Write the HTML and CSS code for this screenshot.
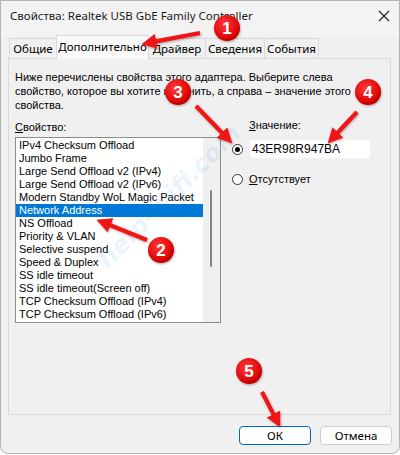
FILE: index.html
```html
<!DOCTYPE html>
<html lang="ru">
<head>
<meta charset="utf-8">
<title>Свойства</title>
<link rel="stylesheet" href="styles.css">
</head>
<body>
<div class="window">
  <div class="titlebar">
    <span class="title">Свойства: Realtek USB GbE Family Controller</span>
    <svg class="close" width="12" height="12" viewBox="0 0 12 12"><path d="M1 1 L11 11 M11 1 L1 11" stroke="#1a1a1a" stroke-width="1.1" fill="none"/></svg>
  </div>
  <div class="tabs">
    <div class="tab t1">Общие</div>
    <div class="tab t2 active">Дополнительно</div>
    <div class="tab t3">Драйвер</div>
    <div class="tab t4">Сведения</div>
    <div class="tab t5">События</div>
  </div>
  <div class="panel">
    <p class="desc">Ниже перечислены свойства этого адаптера. Выберите слева<br>свойство, которое вы хотите изменить, а справа – значение этого<br>свойства.</p>
    <div class="cols">
      <div class="left">
        <div class="label"><u>С</u>войство:</div>
        <div class="listbox">
          <ul class="items">
            <li>IPv4 Checksum Offload</li>
            <li>Jumbo Frame</li>
            <li>Large Send Offload v2 (IPv4)</li>
            <li>Large Send Offload v2 (IPv6)</li>
            <li>Modern Standby WoL Magic Packet</li>
            <li class="sel">Network Address</li>
            <li>NS Offload</li>
            <li>Priority &amp; VLAN</li>
            <li>Selective suspend</li>
            <li>Speed &amp; Duplex</li>
            <li>SS idle timeout</li>
            <li>SS idle timeout(Screen off)</li>
            <li>TCP Checksum Offload (IPv4)</li>
            <li>TCP Checksum Offload (IPv6)</li>
          </ul>
          <div class="scroll"><div class="thumb"></div></div>
        </div>
      </div>
      <div class="right">
        <div class="label vlabel"><u>З</u>начение:</div>
        <div class="opt opt1"><span class="radio on"></span><div class="input">43ER98R947BA</div></div>
        <div class="opt opt2"><span class="radio"></span><span class="optlabel"><u>О</u>тсутствует</span></div>
      </div>
    </div>
  </div>
  <div class="buttons">
    <button class="btn default">ОК</button>
    <button class="btn">Отмена</button>
  </div>
  <div class="watermark">help-wifi.com</div>
  <svg class="overlay" width="400" height="455" viewBox="0 0 400 455">
    <defs>
      <radialGradient id="rg" cx="0.4" cy="0.35" r="0.7">
        <stop offset="0" stop-color="#ff3b3b"/>
        <stop offset="0.7" stop-color="#e00808"/>
        <stop offset="1" stop-color="#b30000"/>
      </radialGradient>
      <marker id="head" markerWidth="3.6" markerHeight="3.6" refX="1" refY="5" viewBox="0 0 10 10" orient="auto" markerUnits="strokeWidth">
        <path d="M0,0 L10,5 L0,10 z" fill="#f01414"/>
      </marker>
      <filter id="sh" x="-30%" y="-30%" width="160%" height="160%">
        <feDropShadow dx="0.6" dy="1" stdDeviation="1" flood-color="#000" flood-opacity="0.35"/>
      </filter>
    </defs>
    <g stroke="#f01414" stroke-width="4.2" fill="none" marker-end="url(#head)" filter="url(#sh)">
      <line x1="200" y1="33" x2="154.8" y2="41.6"/>
      <line x1="196" y1="106" x2="222.9" y2="133.7"/>
      <line x1="357" y1="112" x2="336.9" y2="133.5"/>
      <line x1="147" y1="240" x2="109.1" y2="224.8"/>
      <line x1="262" y1="392" x2="274.1" y2="415.4"/>
    </g>
    <g filter="url(#sh)">
      <circle cx="227" cy="28" r="13" fill="url(#rg)"/>
      <circle cx="178" cy="92" r="13" fill="url(#rg)"/>
      <circle cx="368" cy="92" r="13" fill="url(#rg)"/>
      <circle cx="161" cy="250" r="13" fill="url(#rg)"/>
      <circle cx="249" cy="371" r="13" fill="url(#rg)"/>
    </g>
    <g class="nums" fill="#fff" text-anchor="middle">
      <text x="227" y="34">1</text>
      <text x="178" y="98">3</text>
      <text x="368" y="98">4</text>
      <text x="161" y="256">2</text>
      <text x="249" y="377">5</text>
    </g>
  </svg>
</div>
</body>
</html>
```

FILE: styles.css
```css
* { box-sizing: border-box; }
html, body { margin: 0; padding: 0; }
body {
  width: 400px;
  height: 455px;
  background: #ffffff;
  overflow: hidden;
  font-family: "Liberation Sans", Arial, sans-serif;
  font-size: 11px;
  color: #000;
}
.window {
  position: relative;
  width: 400px;
  height: 454px;
  background: #f0f0f0;
  border: 1px solid #b4b4b4;
  border-radius: 0 0 8px 8px;
  overflow: hidden;
}
.titlebar {
  height: 35px;
  display: flex;
  align-items: center;
  justify-content: space-between;
  padding: 0 8px 0 9px;
  background: #f3f3f3;
}
.title {
  font-family: "Noto Sans", sans-serif;
  font-size: 11.5px;
  color: #1a1a1a;
  margin-top: -6px;
}
.close { margin-top: -6px; margin-right: 1px; }
.tabs {
  height: 22px;
  display: flex;
  align-items: flex-end;
  padding-left: 8px;
  position: relative;
  z-index: 2;
}
.tab {
  height: 20px;
  font-family: "Noto Sans", sans-serif;
  font-size: 11.5px;
  line-height: 19px;
  border: 1px solid #d9d9d9;
  border-bottom: none;
  border-left: none;
  background: #f0f0f0;
  text-align: center;
  color: #000;
}
.t1 { width: 48px; border-left: 1px solid #d9d9d9; }
.t2 { width: 92px; }
.t3 { width: 57px; }
.t4 { width: 59px; }
.t5 { width: 54px; }
.tab.active {
  height: 24px;
  margin-bottom: -1px;
  background: #f9f9f9;
  line-height: 22px;
  border-left: 1px solid #d9d9d9;
  margin-left: -1px;
  width: 93px;
}
.panel {
  margin: 0 8px 0 7px;
  height: 357px;
  border: 1px solid #d9d9d9;
  background: #f0f0f0;
  padding: 11px 6px 0 6px;
  position: relative;
  z-index: 1;
}
.desc {
  margin: 0;
  line-height: 14px;
}
.cols {
  display: flex;
  margin-top: 8px;
}
.left { width: 206px; }
.label { line-height: 14px; }
.listbox {
  margin-top: 3px;
  height: 186px;
  border: 1px solid #8c8c8c;
  background: #fff;
  display: flex;
}
.items {
  list-style: none;
  margin: 0;
  padding: 1px 0 0 0;
  flex: 1;
}
.items li {
  height: 13px;
  line-height: 13px;
  padding-left: 3px;
  white-space: nowrap;
}
.items li.sel {
  background: #0078d7;
  color: #fff;
}
.scroll {
  width: 17px;
  background: #f0f0f0;
  position: relative;
}
.thumb {
  position: absolute;
  left: 7px;
  top: 52px;
  width: 2px;
  height: 77px;
  background: #858585;
  border-radius: 1px;
}
.right {
  margin-left: 11px;
  margin-top: -2px;
  flex: 1;
}
.vlabel { padding-left: 17px; }
.opt {
  display: flex;
  align-items: center;
}
.opt1 { margin-top: 8px; }
.opt2 { margin-top: 14px; }
.radio {
  width: 11px;
  height: 11px;
  border-radius: 50%;
  border: 1px solid #333;
  background: #fff;
  position: relative;
  flex: none;
}
.radio.on::after {
  content: "";
  position: absolute;
  left: 2px;
  top: 2px;
  width: 5px;
  height: 5px;
  border-radius: 50%;
  background: #000;
}
.input {
  margin-left: 7px;
  width: 120px;
  height: 18px;
  background: #fff;
  font-size: 12px;
  line-height: 18px;
  padding-left: 2px;
}
.optlabel { margin-left: 6px; line-height: 14px; }
.buttons {
  display: flex;
  justify-content: flex-end;
  gap: 9px;
  padding-right: 7px;
  margin-top: 11px;
}
.btn {
  width: 72px;
  height: 19px;
  padding: 0;
  font-family: "Noto Sans", sans-serif;
  font-size: 11.5px;
  line-height: 16px;
  background: #fdfdfd;
  border: 1px solid #d0d0d0;
  border-radius: 4px;
  color: #000;
}
.btn.default {
  border: 1.5px solid #0067c0;
}
.watermark {
  position: absolute;
  left: 168px;
  top: 195px;
  white-space: nowrap;
  font-family: "DejaVu Sans", sans-serif;
  font-weight: bold;
  font-style: italic;
  font-size: 25px;
  color: rgba(40, 140, 220, 0.10);
  transform: translate(-50%, -50%) rotate(-45deg);
  z-index: 3;
  pointer-events: none;
}
.overlay {
  position: absolute;
  left: -1px;
  top: -1px;
  z-index: 5;
}
.nums text {
  font-family: "Liberation Sans", Arial, sans-serif;
  font-weight: bold;
  font-size: 17px;
}
```
